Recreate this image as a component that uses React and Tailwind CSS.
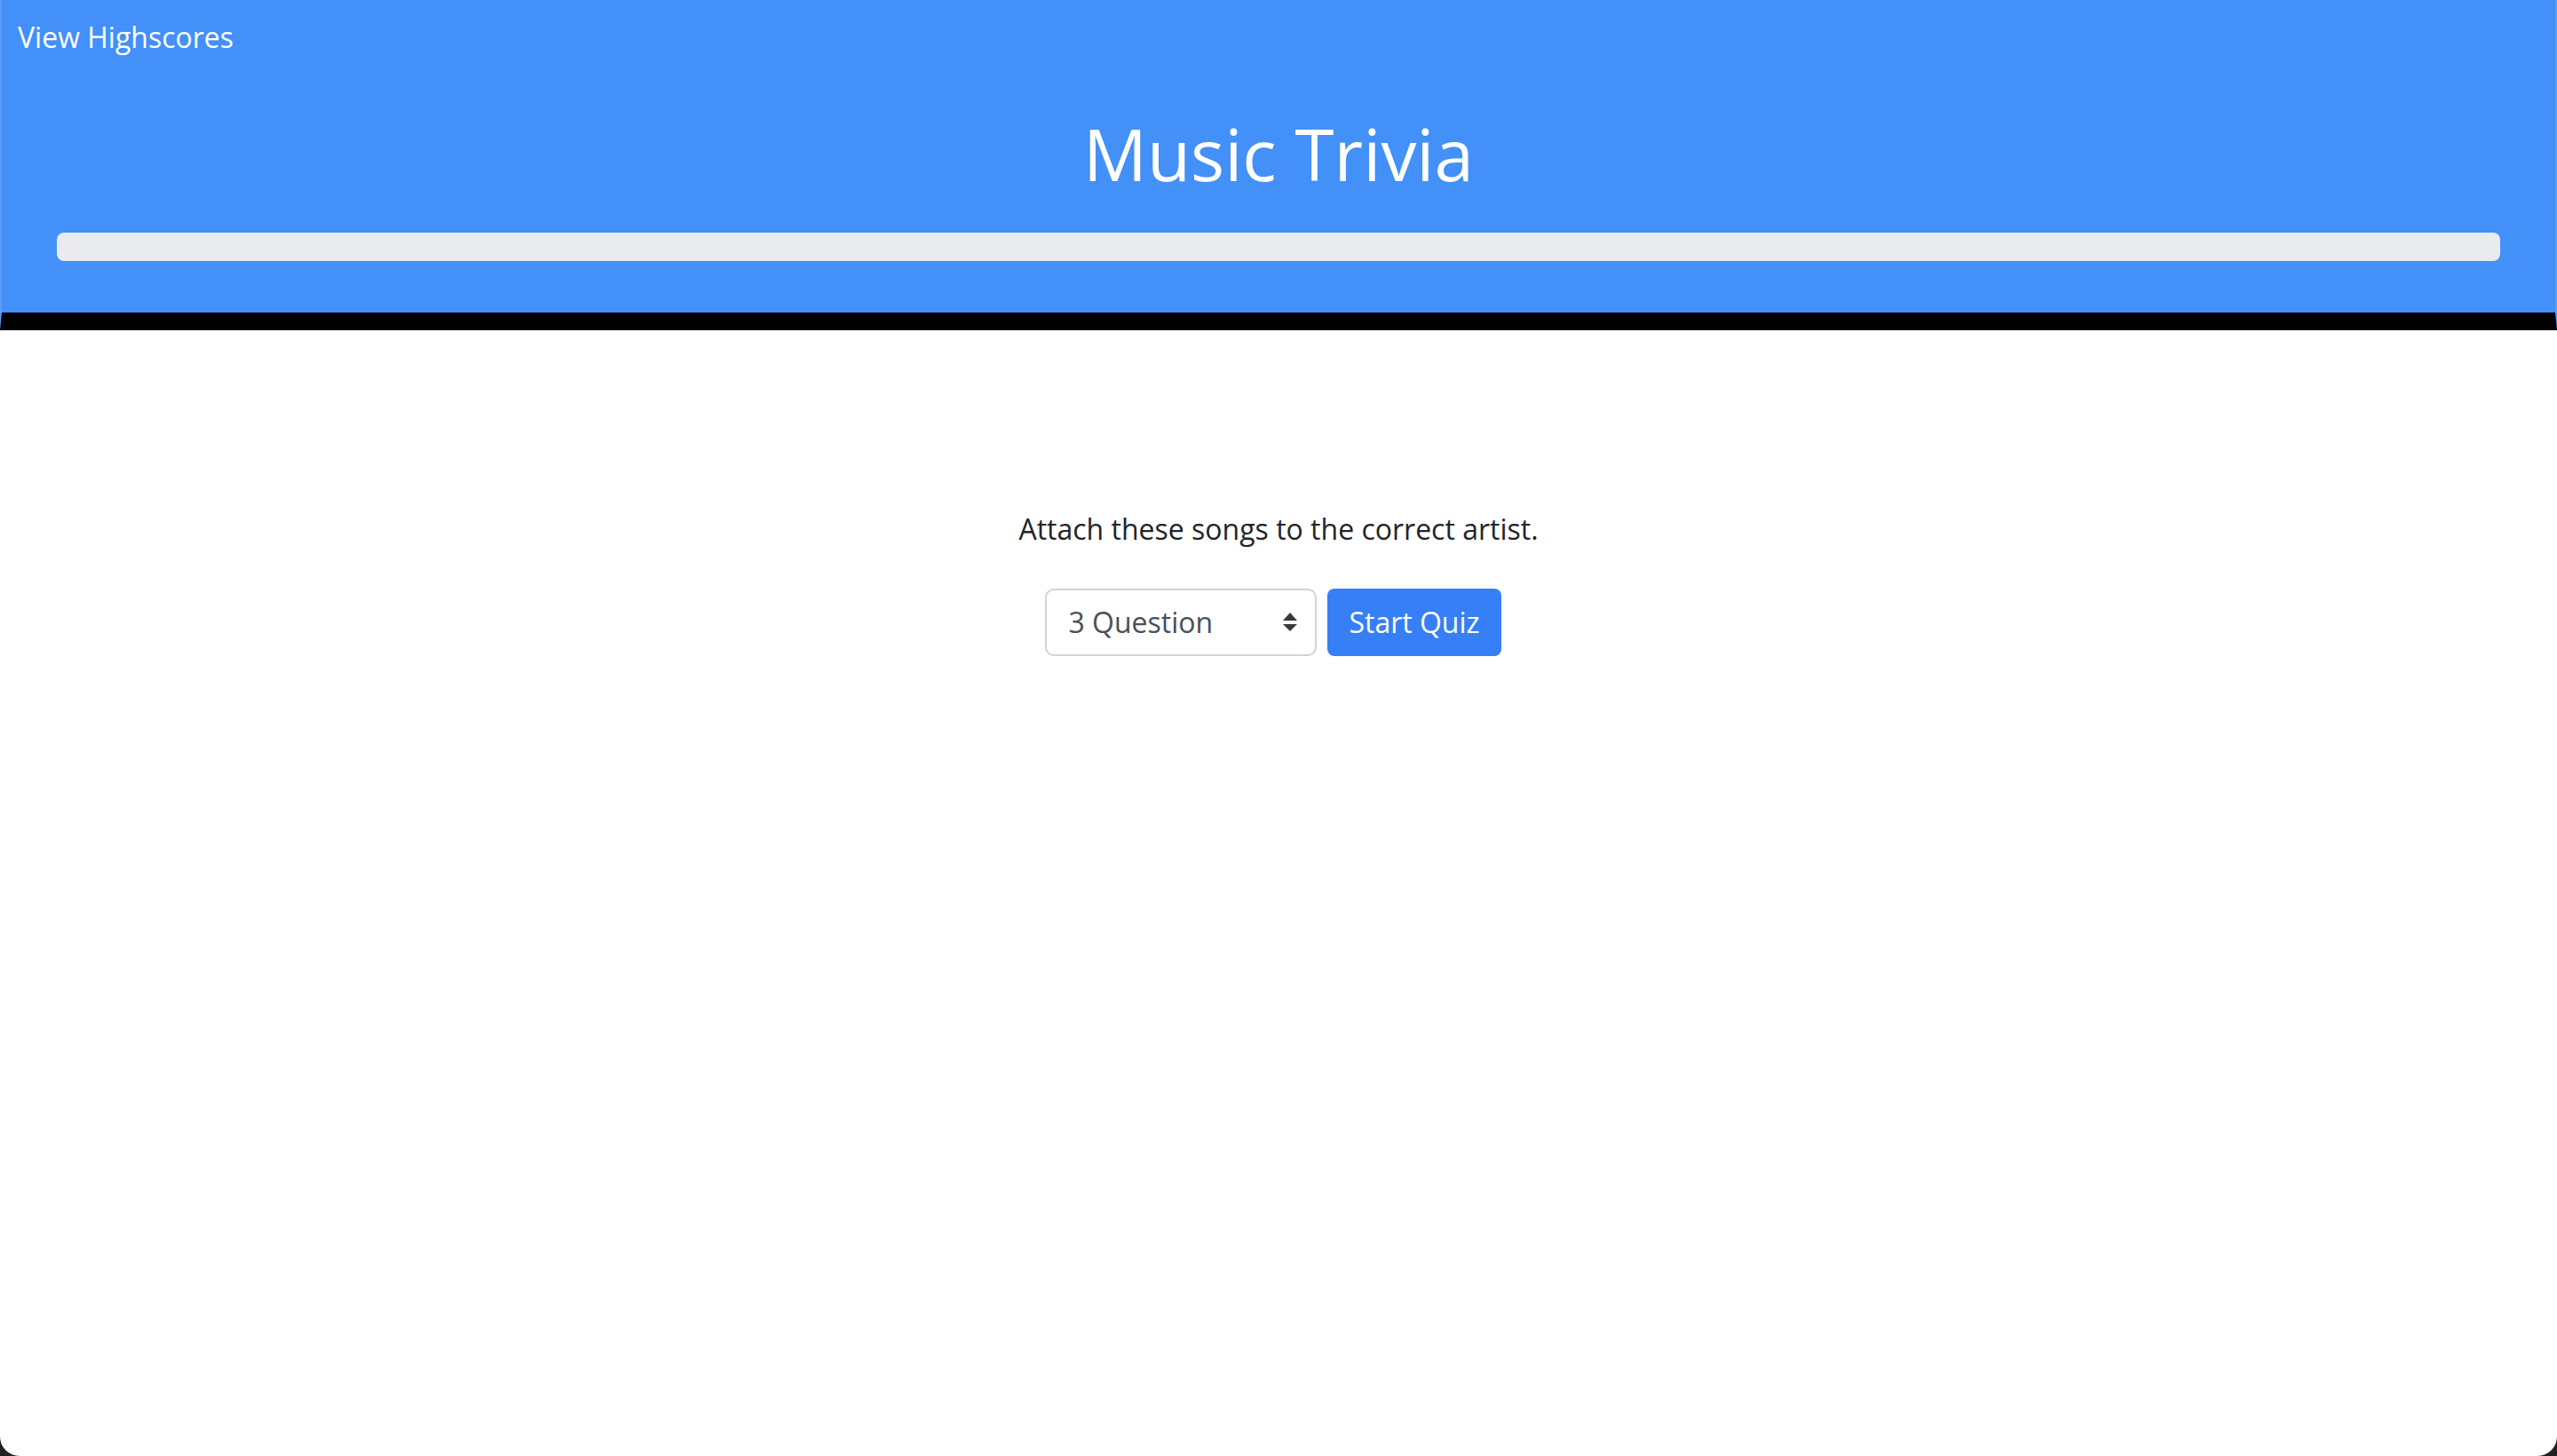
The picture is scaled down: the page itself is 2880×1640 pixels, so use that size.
import { useState } from 'react';

function SelectArrows() {
  return (
    <svg width="16" height="21" viewBox="0 0 16 21" className="text-[#343a40]">
      <polygon points="8,0 16,9 0,9" fill="currentColor" />
      <polygon points="0,13 16,13 8,21" fill="currentColor" />
    </svg>
  );
}

export default function App() {
  const [count, setCount] = useState('3');

  return (
    <div className="w-[2880px] h-[1640px] bg-[#222] overflow-hidden">
      <div
        className="h-full bg-white rounded-b-[22px] overflow-hidden"
        style={{ fontFamily: '"Open Sans", "Liberation Sans", sans-serif' }}
      >
        <header className="bg-[#4390f8] border-b-[20px] border-b-black border-x-2 border-x-[#5a9ef8]">
          <div className="h-[66px] pt-[18px] pl-[18px]">
            <a className="block text-[32px] leading-[48px] text-white cursor-pointer">View Highscores</a>
          </div>
          <h1 className="mt-[59px] text-center text-white text-[80px] leading-[96px] font-normal">
            Music Trivia
          </h1>
          <div className="mx-[62px] mt-[41px] mb-[58px] h-[32px] rounded-[8px] bg-[#e9ebef]"></div>
        </header>

        <main className="pt-[200px] flex flex-col items-center">
          <p className="text-[32px] leading-[48px] text-[#212529]">
            Attach these songs to the correct artist.
          </p>
          <div className="mt-[43px] flex items-center gap-[12px] mr-[12px]">
            <label className="relative block">
              <select
                value={count}
                onChange={(e) => setCount(e.target.value)}
                className="appearance-none w-[306px] h-[76px] pl-[24px] pr-[48px] text-[32px] text-[#495057] bg-white border-2 border-[#ced4da] rounded-[10px] outline-none"
                style={{ fontFamily: 'inherit' }}
              >
                <option value="3">3 Question</option>
                <option value="5">5 Question</option>
                <option value="10">10 Question</option>
              </select>
              <span className="absolute right-[22px] top-[27px] pointer-events-none">
                <SelectArrows />
              </span>
            </label>
            <button
              type="button"
              className="h-[76px] px-[24px] text-[32px] text-white bg-[#367ff6] rounded-[8px]"
            >
              Start Quiz
            </button>
          </div>
        </main>
      </div>
    </div>
  );
}
